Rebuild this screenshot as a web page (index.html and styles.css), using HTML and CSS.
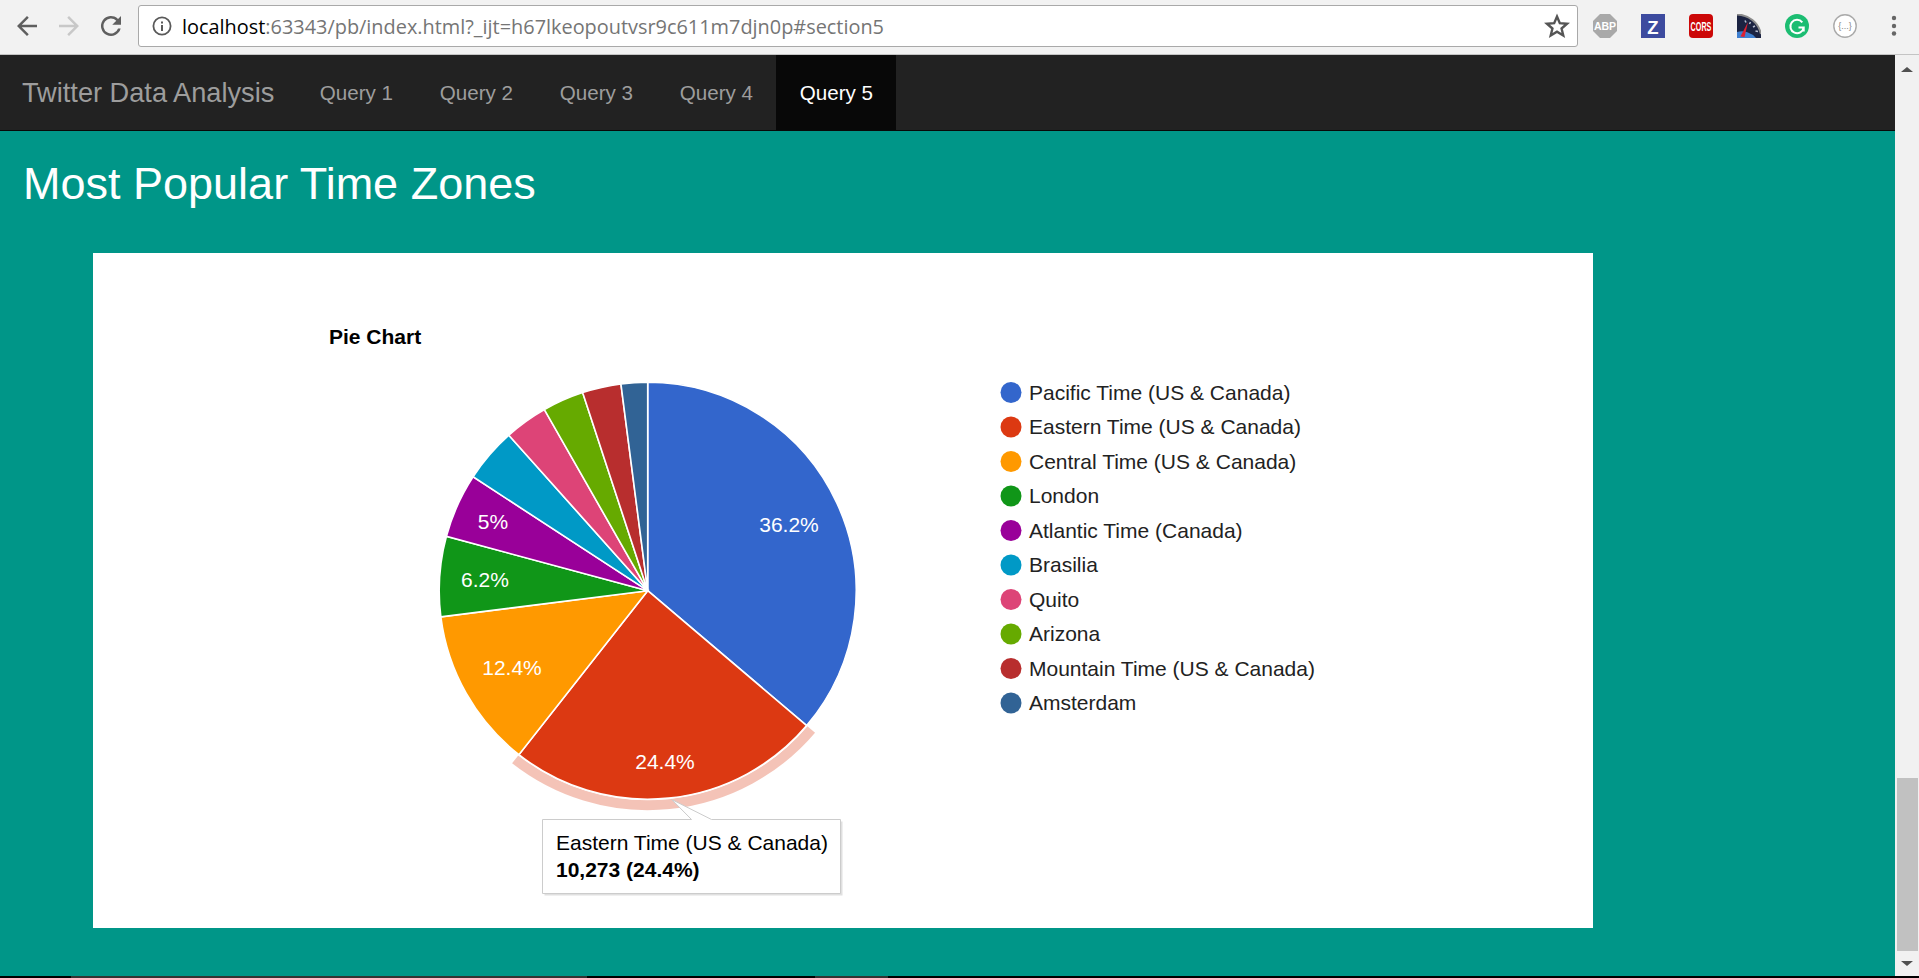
FILE: index.html
```html
<!DOCTYPE html>
<html lang="en">
<head>
    <meta charset="UTF-8">
    <title>Twitter Data Analysis</title>
    <link rel="stylesheet" href="styles.css">
</head>
<body>
    <header class="toolbar">
        <div class="toolbar-nav">
            <svg class="tool-icon" viewBox="0 0 24 24"><path d="M20 11H7.8l5.6-5.6L12 4l-8 8 8 8 1.4-1.4L7.8 13H20z" fill="#5f5f5f"/></svg>
            <svg class="tool-icon" viewBox="0 0 24 24"><path d="M4 11h12.2l-5.6-5.6L12 4l8 8-8 8-1.4-1.4 5.6-5.6H4z" fill="#c8c8c8"/></svg>
            <svg class="tool-icon" viewBox="0 0 24 24"><path d="M17.65 6.35A8 8 0 1 0 19.73 14h-2.08a6 6 0 1 1-1.41-6.24L13 11h7V4z" fill="#5f5f5f"/></svg>
        </div>
        <div class="omnibox">
            <svg class="info-icon" viewBox="0 0 22 22"><circle cx="11" cy="11" r="8.6" fill="none" stroke="#5a5a5a" stroke-width="1.8"/><rect x="10" y="10" width="2" height="6" fill="#5a5a5a"/><rect x="10" y="6.5" width="2" height="2" fill="#5a5a5a"/></svg>
            <span class="url"><span class="url-host">localhost</span>:63343/pb/index.html?_ijt=h67lkeopoutvsr9c611m7djn0p#section5</span>
            <svg class="star-icon" viewBox="0 0 24 24"><path d="M12 3.2l2.6 6.2 6.7.5-5.1 4.4 1.6 6.5L12 17.3l-5.8 3.5 1.6-6.5-5.1-4.4 6.7-.5z" fill="none" stroke="#555" stroke-width="2.2"/></svg>
        </div>
        <div class="extensions">
            <svg class="ext" viewBox="0 0 24 24"><path d="M7 0h10l7 7v10l-7 7H7l-7-7V7z" fill="#a9a9a9"/><text x="12" y="16" class="ext-abp">ABP</text></svg>
            <svg class="ext" viewBox="0 0 24 24"><rect width="24" height="24" fill="#3d4b9f"/><text x="12" y="19.5" class="ext-z">Z</text></svg>
            <svg class="ext" viewBox="0 0 24 24"><rect width="24" height="24" rx="4" fill="#cc0808"/><text transform="translate(12 16.5) scale(.6 1)" class="ext-cors">CORS</text></svg>
            <svg class="ext" viewBox="0 0 24 24">
                <path d="M0 0.5a25 25 0 0 1 24 19.5V24H0z" fill="#1b2342"/>
                <path d="M0 0.5a25 25 0 0 1 24 19.5" fill="none" stroke="#8c8c8c" stroke-width="2"/>
                <path d="M0 24V18a18 18 0 0 1 19 6z" fill="#3f7fd0"/>
                <path d="M8 6.5l1 2M13.5 8l-1 2M18 12l-2 1M21 17.5l-2.500-.5" stroke="#b8bfd0" stroke-width="1.6"/>
                <path d="M3.500 22.500L11 8l-3.500 15z" fill="#e02030"/>
            </svg>
            <svg class="ext" viewBox="0 0 24 24"><circle cx="12" cy="12" r="12" fill="#1cbd72"/><path d="M17.300 8.300a6.700 6.700 0 1 0 1.400 5.200h-5.200M18.700 13.500v4" fill="none" stroke="#fff" stroke-width="2"/></svg>
            <svg class="ext" viewBox="0 0 24 24"><circle cx="12" cy="12" r="11.200" fill="#fff" stroke="#aaa" stroke-width="1.400"/><text x="12" y="15" class="ext-json">{...}</text></svg>
        </div>
        <svg class="kebab" viewBox="0 0 6 22"><circle cx="3" cy="3" r="2.200"/><circle cx="3" cy="11" r="2.200"/><circle cx="3" cy="18.500" r="2.200"/></svg>
    </header>

    <div class="viewport">
        <main class="page">
            <nav class="navbar">
                <a class="brand">Twitter Data Analysis</a>
                <a class="nav-link">Query 1</a>
                <a class="nav-link">Query 2</a>
                <a class="nav-link">Query 3</a>
                <a class="nav-link">Query 4</a>
                <a class="nav-link active">Query 5</a>
            </nav>
            <section class="section">
                <h1 class="section-title">Most Popular Time Zones</h1>
                <div class="chart-card">
                    <svg class="chart" id="chart" viewBox="0 0 1500 675" width="1500" height="675"></svg>
                </div>
            </section>
        </main>
        <aside class="scrollbar">
            <span class="arrow-up"></span>
            <span class="thumb"></span>
            <span class="arrow-down"></span>
        </aside>
    </div>
    <div class="taskbar">
        <span class="task task-wide"></span>
        <span class="task task-small"></span>
    </div>

    <script>
        // pie geometry, in chart coordinates (card starts at 93,253)
        const cx = 554.7, cy = 337.7, r = 208.5;
        const slices = [
            ['Pacific Time (US & Canada)', '#3366cc', 36.2],
            ['Eastern Time (US & Canada)', '#dc3912', 24.4],
            ['Central Time (US & Canada)', '#ff9900', 12.4],
            ['London', '#109618', 6.2],
            ['Atlantic Time (Canada)', '#990099', 5],
            ['Brasilia', '#0099c6', 4.2],
            ['Quito', '#dd4477', 3.35],
            ['Arizona', '#66aa00', 3.2],
            ['Mountain Time (US & Canada)', '#b82e2e', 3],
            ['Amsterdam', '#316395', 2.05]
        ];
        const labels = [
            ['36.2%', 696, 279], ['24.4%', 572, 516], ['12.4%', 419, 422],
            ['6.2%', 392, 334], ['5%', 400, 276]
        ];
        const chart = document.getElementById('chart');
        let html = '<text x="236" y="91" class="chart-title">Pie Chart</text>';

        function point(pct, radius) {
            const a = pct * 3.6 * Math.PI / 180;
            return [cx + radius * Math.sin(a), cy - radius * Math.cos(a)];
        }

        let start = 0;
        slices.forEach(function (s, i) {
            const end = start + s[2];
            const p1 = point(start, r), p2 = point(end, r);
            const large = s[2] > 50 ? 1 : 0;
            if (i === 1) {
                const o1 = point(start, 214.5), o2 = point(end, 214.5);
                html += `<path d="M${o1} A214.5 214.5 0 0 1 ${o2}" fill="none" stroke="${s[1]}" stroke-opacity="0.3" stroke-width="10"/>`;
            }
            html += `<path d="M${cx} ${cy} L${p1} A${r} ${r} 0 ${large} 1 ${p2} Z" fill="${s[1]}" stroke="#fff" stroke-width="1.6"/>`;
            const ly = 139.5 + i * 34.5;
            html += `<circle cx="918" cy="${ly}" r="10.5" fill="${s[1]}"/>`;
            html += `<text x="936" y="${ly + 7}" class="legend-label">${s[0].replace('&', '&amp;')}</text>`;
            start = end;
        });
        labels.forEach(function (l) {
            html += `<text x="${l[1]}" y="${l[2]}" class="slice-label">${l[0]}</text>`;
        });
        // tooltip
        html += '<path d="M449.5 566.5 H598.5 L578.7 546.5 L618.5 566.5 H747.5 V640.5 H449.5 Z" class="tooltip-shadow"/>';
        html += '<path d="M449.5 566.5 H598.5 L578.7 546.5 L618.5 566.5 H747.5 V640.5 H449.5 Z" class="tooltip-box"/>';
        html += '<text x="463" y="597" class="tooltip-text">Eastern Time (US &amp; Canada)</text>';
        html += '<text x="463" y="624" class="tooltip-text tooltip-value">10,273 (24.4%)</text>';
        chart.innerHTML = html;
    </script>
</body>
</html>
```

FILE: styles.css
```css
* {
    box-sizing: border-box;
}
html, body {
    height: 100%;
    margin: 0;
    overflow: hidden;
}
body {
    font-family: "Liberation Sans", Arial, sans-serif;
    background: #000;
    display: flex;
    flex-direction: column;
}

/* browser toolbar */
.toolbar {
    height: 55px;
    flex: none;
    display: flex;
    align-items: center;
    background: #f2f2f2;
    border-bottom: 1px solid #c4c4c4;
    padding-right: 16px;
}
.toolbar-nav {
    display: flex;
    align-items: center;
    gap: 12px;
    padding: 0 0 3px 12px;
    width: 138px;
}
.tool-icon {
    width: 30px;
    height: 30px;
    flex: none;
}
.omnibox {
    width: 1440px;
    height: 42px;
    margin-top: -2px;
    display: flex;
    align-items: center;
    background: #fff;
    border: 1px solid #a9a9a9;
    border-radius: 3px;
    padding: 0 7px 0 12px;
}
.info-icon {
    width: 22px;
    height: 22px;
    flex: none;
}
.url {
    margin-left: 9px;
    flex: 1;
    font-family: "Open Sans", sans-serif;
    font-size: 19.9px;
    color: #757575;
    white-space: nowrap;
}
.url-host {
    color: #000;
}
.star-icon {
    width: 26px;
    height: 26px;
    flex: none;
}
.extensions {
    display: flex;
    gap: 24px;
    margin-left: 15px;
    margin-top: -2px;
}
.ext {
    width: 24px;
    height: 24px;
    display: block;
}
.ext text {
    font-family: "Liberation Sans", sans-serif;
    font-weight: bold;
    text-anchor: middle;
    fill: #fff;
}
.ext .ext-abp {
    font-size: 10.5px;
}
.ext .ext-z {
    font-size: 18.5px;
}
.ext .ext-cors {
    font-size: 12px;
}
.ext .ext-json {
    font-size: 9px;
    font-weight: normal;
    fill: #888;
}
.kebab {
    width: 6px;
    height: 22px;
    margin-left: 34px;
    margin-top: -2px;
    fill: #666;
}

/* page area with its scrollbar */
.viewport {
    flex: 1;
    min-height: 0;
    display: flex;
}
.page {
    width: 1895px;
    background: #009688;
}
.navbar {
    height: 76px;
    display: flex;
    background: #222;
    border-bottom: 1px solid #080808;
}
.brand {
    font-size: 27.2px;
    color: #9d9d9d;
    line-height: 75px;
    padding: 0 22px 0 22px;
}
.nav-link {
    width: 120px;
    text-align: center;
    font-size: 20.6px;
    line-height: 75px;
    color: #9d9d9d;
}
.nav-link.active {
    color: #fff;
    background: #080808;
}
.section {
    padding: 0 0 0 23px;
}
.section-title {
    margin: 0;
    font-size: 45px;
    font-weight: normal;
    line-height: 106px;
    height: 122px;
    color: #fff;
}
.chart-card {
    width: 1500px;
    height: 675px;
    margin-left: 70px;
    background: #fff;
}
.chart {
    display: block;
}
.chart text {
    font-family: "Liberation Sans", Arial, sans-serif;
}
.chart .chart-title {
    font-size: 21px;
    font-weight: bold;
    fill: #000;
}
.chart .legend-label {
    font-size: 21px;
    fill: #222;
}
.chart .slice-label {
    font-size: 21px;
    fill: #fff;
    text-anchor: middle;
}
.tooltip-box {
    fill: #fff;
    stroke: #ccc;
    stroke-width: 1;
}
.tooltip-shadow {
    fill: #ccc;
    opacity: 0.6;
    transform: translate(2px, 2px);
}
.chart .tooltip-text {
    font-size: 21px;
    fill: #000;
}
.chart .tooltip-value {
    font-weight: bold;
}

/* scrollbar */
.scrollbar {
    width: 24px;
    background: #f1f1f1;
    display: flex;
    flex-direction: column;
    align-items: center;
}
.arrow-up {
    margin-top: 12px;
    border: 6px solid transparent;
    border-top: 0;
    border-bottom: 5px solid #505050;
}
.thumb {
    width: 21px;
    height: 173px;
    margin-top: 706px;
    background: #c1c1c1;
}
.arrow-down {
    margin-top: 10px;
    border: 6px solid transparent;
    border-bottom: 0;
    border-top: 5px solid #505050;
}

/* strip of the desktop taskbar under the window */
.taskbar {
    height: 2px;
    flex: none;
    display: flex;
    background: #000;
    padding-left: 71px;
}
.task {
    background: #333;
}
.task-wide {
    width: 516px;
}
.task-small {
    width: 73px;
    margin-left: 228px;
}
```
